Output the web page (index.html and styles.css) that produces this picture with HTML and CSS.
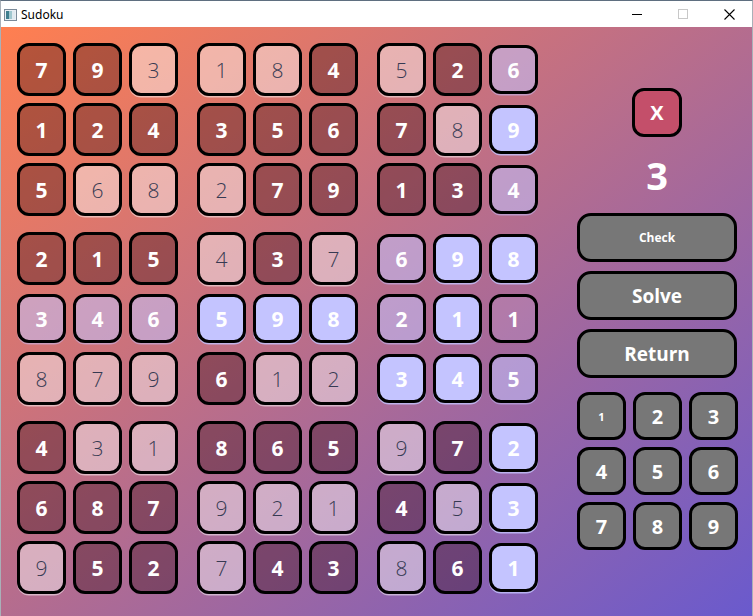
FILE: index.html
```html
<!DOCTYPE html>
<html>
<head>
<meta charset="utf-8">
<title>Sudoku</title>
<link rel="stylesheet" href="styles.css">
</head>
<body>
<div class="window">
  <div class="titlebar">
    <svg class="app-icon" width="13" height="12" viewBox="0 0 13 12">
      <rect x="0.5" y="0.5" width="12" height="11" fill="#e8eef4" stroke="#7a8a99"/>
      <rect x="2" y="2" width="3" height="8" fill="#3f7f8f"/>
      <rect x="5" y="2" width="3" height="8" fill="#9fc7cf"/>
      <rect x="8" y="2" width="3" height="8" fill="#dfe9ef"/>
    </svg>
    <span class="title">Sudoku</span>
    <div class="controls">
      <span class="ctl"><svg width="10" height="10" viewBox="0 0 10 10"><line x1="0" y1="5.5" x2="10" y2="5.5" stroke="#000" stroke-width="1"/></svg></span>
      <span class="ctl"><svg width="10" height="10" viewBox="0 0 10 10"><rect x="0.5" y="0.5" width="9" height="9" fill="none" stroke="#c8c8c8" stroke-width="1"/></svg></span>
      <span class="ctl"><svg width="11" height="11" viewBox="0 0 11 11"><path d="M0.5 0.5 L10.5 10.5 M10.5 0.5 L0.5 10.5" stroke="#000" stroke-width="1.1"/></svg></span>
    </div>
  </div>
  <div class="content">
    <div class="board">
      <div class="block">
        <div class="cell d">7</div><div class="cell d">9</div><div class="cell l">3</div>
        <div class="cell d">1</div><div class="cell d">2</div><div class="cell d">4</div>
        <div class="cell d">5</div><div class="cell l">6</div><div class="cell l">8</div>
      </div>
      <div class="block">
        <div class="cell l">1</div><div class="cell l">8</div><div class="cell d">4</div>
        <div class="cell d">3</div><div class="cell d">5</div><div class="cell d">6</div>
        <div class="cell l">2</div><div class="cell d">7</div><div class="cell d">9</div>
      </div>
      <div class="block">
        <div class="cell l">5</div><div class="cell d">2</div><div class="cell p">6</div>
        <div class="cell d">7</div><div class="cell l">8</div><div class="cell v">9</div>
        <div class="cell d">1</div><div class="cell d">3</div><div class="cell p">4</div>
      </div>
      <div class="block">
        <div class="cell d">2</div><div class="cell d">1</div><div class="cell d">5</div>
        <div class="cell p">3</div><div class="cell p">4</div><div class="cell p">6</div>
        <div class="cell l">8</div><div class="cell l">7</div><div class="cell l">9</div>
      </div>
      <div class="block">
        <div class="cell l">4</div><div class="cell d">3</div><div class="cell l">7</div>
        <div class="cell v">5</div><div class="cell v">9</div><div class="cell v">8</div>
        <div class="cell d">6</div><div class="cell l">1</div><div class="cell l">2</div>
      </div>
      <div class="block">
        <div class="cell p">6</div><div class="cell v">9</div><div class="cell v">8</div>
        <div class="cell p">2</div><div class="cell v">1</div><div class="cell q">1</div>
        <div class="cell v">3</div><div class="cell v">4</div><div class="cell p">5</div>
      </div>
      <div class="block">
        <div class="cell d">4</div><div class="cell l">3</div><div class="cell l">1</div>
        <div class="cell d">6</div><div class="cell d">8</div><div class="cell d">7</div>
        <div class="cell l">9</div><div class="cell d">5</div><div class="cell d">2</div>
      </div>
      <div class="block">
        <div class="cell d">8</div><div class="cell d">6</div><div class="cell d">5</div>
        <div class="cell l">9</div><div class="cell l">2</div><div class="cell l">1</div>
        <div class="cell l">7</div><div class="cell d">4</div><div class="cell d">3</div>
      </div>
      <div class="block">
        <div class="cell l">9</div><div class="cell d">7</div><div class="cell v">2</div>
        <div class="cell d">4</div><div class="cell l">5</div><div class="cell v">3</div>
        <div class="cell l">8</div><div class="cell d">6</div><div class="cell v">1</div>
      </div>
    </div>
    <div class="side">
      <div class="btn-x">X</div>
      <div class="count">3</div>
      <div class="wide small">Check</div>
      <div class="wide">Solve</div>
      <div class="wide">Return</div>
      <div class="pad">
        <div class="key tiny">1</div><div class="key">2</div><div class="key">3</div>
        <div class="key">4</div><div class="key">5</div><div class="key">6</div>
        <div class="key">7</div><div class="key">8</div><div class="key">9</div>
      </div>
    </div>
  </div>
</div>
</body>
</html>
```

FILE: styles.css
```css
html, body {
  margin: 0;
  padding: 0;
}
body {
  width: 753px;
  height: 616px;
  overflow: hidden;
  font-family: "Open Sans", "Noto Sans", sans-serif;
}
.window {
  box-sizing: border-box;
  width: 753px;
  height: 616px;
  display: flex;
  flex-direction: column;
  border-top: 1px solid #5f6f80;
  border-left: 1px solid #a9b0b8;
  border-right: 1px solid #a9b0b8;
}
.titlebar {
  height: 26px;
  flex: none;
  background: #fff;
  display: flex;
  align-items: center;
}
.app-icon {
  margin-left: 3px;
  margin-top: 1px;
}
.title {
  margin-left: 4px;
  font-size: 12px;
  color: #000;
  font-family: "Noto Sans", "Open Sans", sans-serif;
}
.controls {
  margin-left: auto;
  display: flex;
  height: 26px;
}
.ctl {
  width: 46px;
  height: 26px;
  display: flex;
  align-items: center;
  justify-content: center;
}
.content {
  flex: 1;
  display: flex;
  padding: 16px 0 0 16px;
  background: linear-gradient(to bottom right, #ff7f50, #6a5acd);
}
.board {
  display: grid;
  grid-template-columns: repeat(3, 161px);
  grid-template-rows: repeat(3, 173px);
  column-gap: 19px;
  row-gap: 16px;
  align-content: start;
}
.block {
  display: grid;
  grid-template-columns: repeat(3, 49px);
  grid-template-rows: repeat(3, 53px);
  gap: 7px;
  align-items: center;
  justify-items: center;
}
.cell {
  box-sizing: border-box;
  width: 49px;
  height: 53px;
  border: 3px solid #000;
  border-radius: 12px;
  display: flex;
  align-items: center;
  justify-content: center;
  font-size: 21px;
  font-weight: 700;
  color: #fff;
}
.cell.d {
  background: rgba(40, 0, 5, 0.33);
}
.cell.l {
  background: rgba(255, 255, 255, 0.45);
  color: #363a52;
  font-weight: 300;
  box-shadow: 0 1.5px 0 rgba(255, 255, 255, 0.5);
}
.cell.v {
  height: 49px;
  background: #c4c4ff;
  box-shadow: 0 1.5px 0 rgba(196, 196, 255, 0.8);
}
.cell.p {
  height: 49px;
  background: rgba(196, 196, 255, 0.55);
  box-shadow: 0 1.5px 0 rgba(196, 196, 255, 0.5);
}
.cell.q {
  height: 49px;
  background: rgba(210, 180, 230, 0.22);
}
.side {
  width: 160px;
  margin-left: 39px;
  display: flex;
  flex-direction: column;
  align-items: center;
}
.btn-x {
  box-sizing: border-box;
  margin-top: 45px;
  width: 50px;
  height: 49px;
  border: 3px solid #000;
  border-radius: 12px;
  background: #c44f6a;
  color: #fff;
  font-weight: 700;
  font-size: 20px;
  display: flex;
  align-items: center;
  justify-content: center;
}
.count {
  height: 76px;
  line-height: 76px;
  font-size: 38px;
  font-weight: 700;
  color: #fff;
}
.wide {
  box-sizing: border-box;
  width: 160px;
  height: 49px;
  margin-bottom: 9px;
  border: 3px solid #000;
  border-radius: 14px;
  background: #777;
  color: #fff;
  font-weight: 700;
  font-size: 19px;
  display: flex;
  align-items: center;
  justify-content: center;
}
.wide.small {
  font-size: 12px;
}
.pad {
  margin-top: 5px;
  align-self: flex-start;
  display: grid;
  grid-template-columns: repeat(3, 49px);
  grid-template-rows: repeat(3, 48px);
  gap: 7px;
}
.key {
  box-sizing: border-box;
  border: 3px solid #000;
  border-radius: 12px;
  background: #777;
  color: #fff;
  font-weight: 700;
  font-size: 20px;
  display: flex;
  align-items: center;
  justify-content: center;
}
.key.tiny {
  font-size: 11px;
}
```
